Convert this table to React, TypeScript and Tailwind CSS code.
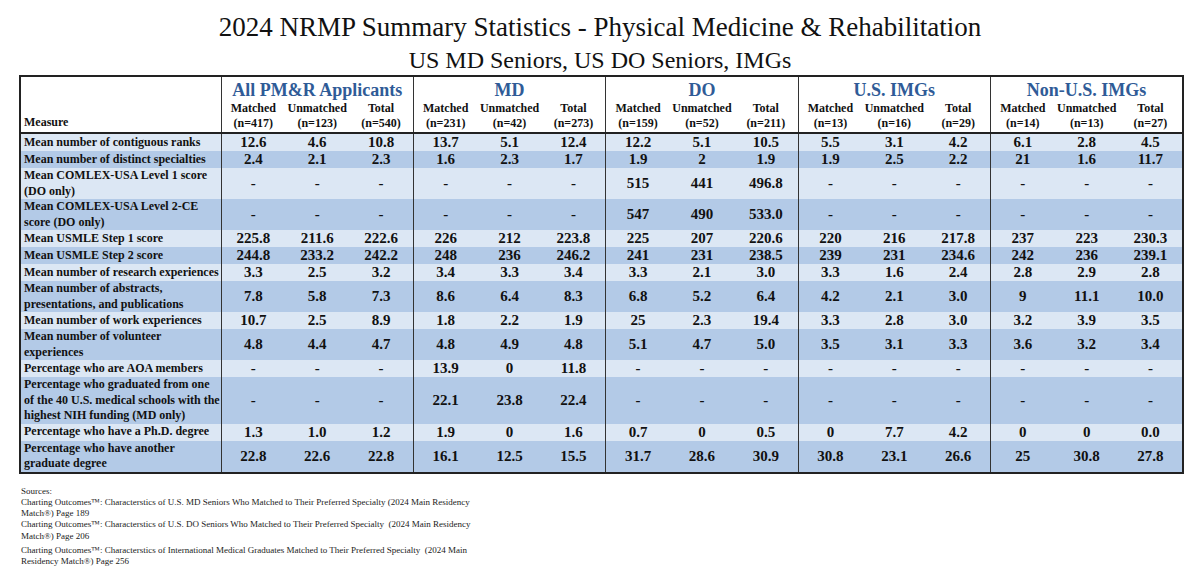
import React from 'react';

interface Group {
  name: string;
  n: string[];
}

interface Row {
  label: string[];
  values: string[];
}

const groups: Group[] = [
  { name: 'All PM&R Applicants', n: ['417', '123', '540'] },
  { name: 'MD', n: ['231', '42', '273'] },
  { name: 'DO', n: ['159', '52', '211'] },
  { name: 'U.S. IMGs', n: ['13', '16', '29'] },
  { name: 'Non-U.S. IMGs', n: ['14', '13', '27'] },
];

const subLabels = ['Matched', 'Unmatched', 'Total'];

const rows: Row[] = [
  { label: ['Mean number of contiguous ranks'], values: '12.6 4.6 10.8 13.7 5.1 12.4 12.2 5.1 10.5 5.5 3.1 4.2 6.1 2.8 4.5'.split(' ') },
  { label: ['Mean number of distinct specialties'], values: '2.4 2.1 2.3 1.6 2.3 1.7 1.9 2 1.9 1.9 2.5 2.2 21 1.6 11.7'.split(' ') },
  { label: ['Mean COMLEX-USA Level 1 score', '(DO only)'], values: '- - - - - - 515 441 496.8 - - - - - -'.split(' ') },
  { label: ['Mean COMLEX-USA Level 2-CE', 'score (DO only)'], values: '- - - - - - 547 490 533.0 - - - - - -'.split(' ') },
  { label: ['Mean USMLE Step 1 score'], values: '225.8 211.6 222.6 226 212 223.8 225 207 220.6 220 216 217.8 237 223 230.3'.split(' ') },
  { label: ['Mean USMLE Step 2 score'], values: '244.8 233.2 242.2 248 236 246.2 241 231 238.5 239 231 234.6 242 236 239.1'.split(' ') },
  { label: ['Mean number of research experiences'], values: '3.3 2.5 3.2 3.4 3.3 3.4 3.3 2.1 3.0 3.3 1.6 2.4 2.8 2.9 2.8'.split(' ') },
  { label: ['Mean number of abstracts,', 'presentations, and publications'], values: '7.8 5.8 7.3 8.6 6.4 8.3 6.8 5.2 6.4 4.2 2.1 3.0 9 11.1 10.0'.split(' ') },
  { label: ['Mean number of work experiences'], values: '10.7 2.5 8.9 1.8 2.2 1.9 25 2.3 19.4 3.3 2.8 3.0 3.2 3.9 3.5'.split(' ') },
  { label: ['Mean number of volunteer', 'experiences'], values: '4.8 4.4 4.7 4.8 4.9 4.8 5.1 4.7 5.0 3.5 3.1 3.3 3.6 3.2 3.4'.split(' ') },
  { label: ['Percentage who are AOA members'], values: '- - - 13.9 0 11.8 - - - - - - - - -'.split(' ') },
  { label: ['Percentage who graduated from one', 'of the 40 U.S. medical schools with the', 'highest NIH funding (MD only)'], values: '- - - 22.1 23.8 22.4 - - - - - - - - -'.split(' ') },
  { label: ['Percentage who have a Ph.D. degree'], values: '1.3 1.0 1.2 1.9 0 1.6 0.7 0 0.5 0 7.7 4.2 0 0 0.0'.split(' ') },
  { label: ['Percentage who have another', 'graduate degree'], values: '22.8 22.6 22.8 16.1 12.5 15.5 31.7 28.6 30.9 30.8 23.1 26.6 25 30.8 27.8'.split(' ') },
];

const sources = [
  'Charting Outcomes™: Characterstics of U.S. MD Seniors Who Matched to Their Preferred Specialty (2024 Main Residency Match®) Page 189',
  'Charting Outcomes™: Characterstics of U.S. DO Seniors Who Matched to Their Preferred Specialty\u00a0 (2024 Main Residency Match®) Page 206',
  'Charting Outcomes™: Characterstics of International Medical Graduates Matched to Their Preferred Specialty\u00a0 (2024 Main Residency Match®) Page 256',
];

export default function App() {
  return (
    <div className="w-[1200px] h-[568px] bg-white font-[serif] text-[#111] overflow-hidden">
      <h1 className="pt-[11px] text-center text-[27px] leading-[32px] font-normal font-[serif]">
        2024 NRMP Summary Statistics - Physical Medicine &amp; Rehabilitation
      </h1>
      <h2 className="mt-[4px] text-center text-[24px] leading-[27px] font-normal font-[serif]">
        US MD Seniors, US DO Seniors, IMGs
      </h2>

      <table className="ml-[19px] mt-[1px] w-[1165px] table-fixed border-collapse border-2 border-[#222] font-[serif]">
        <colgroup>
          <col className="w-[201px]" />
          {Array.from({ length: 15 }).map((_, i) => (
            <col key={i} />
          ))}
        </colgroup>
        <thead className="bg-white">
          <tr>
            <th
              rowSpan={3}
              className="border-r border-[#333] border-b-2 border-b-[#222] px-[3px] pb-[2px] text-left align-bottom text-[12px] leading-[15px] font-bold"
            >
              Measure
            </th>
            {groups.map((g) => (
              <th
                key={g.name}
                colSpan={3}
                className="border-r border-[#333] pt-[2px] text-center text-[18px] leading-[22px] font-bold text-[#2f5b97]"
              >
                {g.name}
              </th>
            ))}
          </tr>
          <tr>
            {groups.map((g) =>
              subLabels.map((s, i) => (
                <th
                  key={g.name + s}
                  className={`text-center text-[12px] leading-[15px] font-bold ${i === 2 ? 'border-r border-[#333]' : ''}`}
                >
                  {s}
                </th>
              ))
            )}
          </tr>
          <tr>
            {groups.map((g) =>
              g.n.map((n, i) => (
                <th
                  key={g.name + i}
                  className={`border-b-2 border-b-[#222] pb-[1px] text-center text-[12px] leading-[15px] font-bold ${i === 2 ? 'border-r border-[#333]' : ''}`}
                >
                  (n={n})
                </th>
              ))
            )}
          </tr>
        </thead>
        <tbody>
          {rows.map((r, ri) => (
            <tr key={ri} className={ri % 2 === 0 ? 'bg-[#dce7f4]' : 'bg-[#b3cae7]'}>
              <td className="border-r border-[#333] px-[3px] py-0 text-left align-middle whitespace-nowrap text-[12px] leading-[15.5px] font-bold">
                {r.label.map((l, li) => (
                  <div key={li}>{l}</div>
                ))}
              </td>
              {r.values.map((v, vi) => (
                <td
                  key={vi}
                  className={`p-0 text-center align-middle text-[15px] leading-[17px] font-bold ${vi % 3 === 2 ? 'border-r border-[#333]' : ''}`}
                >
                  {v}
                </td>
              ))}
            </tr>
          ))}
        </tbody>
      </table>

      <div className="ml-[21px] mt-[12px] w-[460px] text-[9px] leading-[11.3px] text-[#222] font-[serif]">
        <div>Sources:</div>
        <div>{sources[0]}</div>
        <div>{sources[1]}</div>
        <div className="mt-[3px]">{sources[2]}</div>
      </div>
    </div>
  );
}
